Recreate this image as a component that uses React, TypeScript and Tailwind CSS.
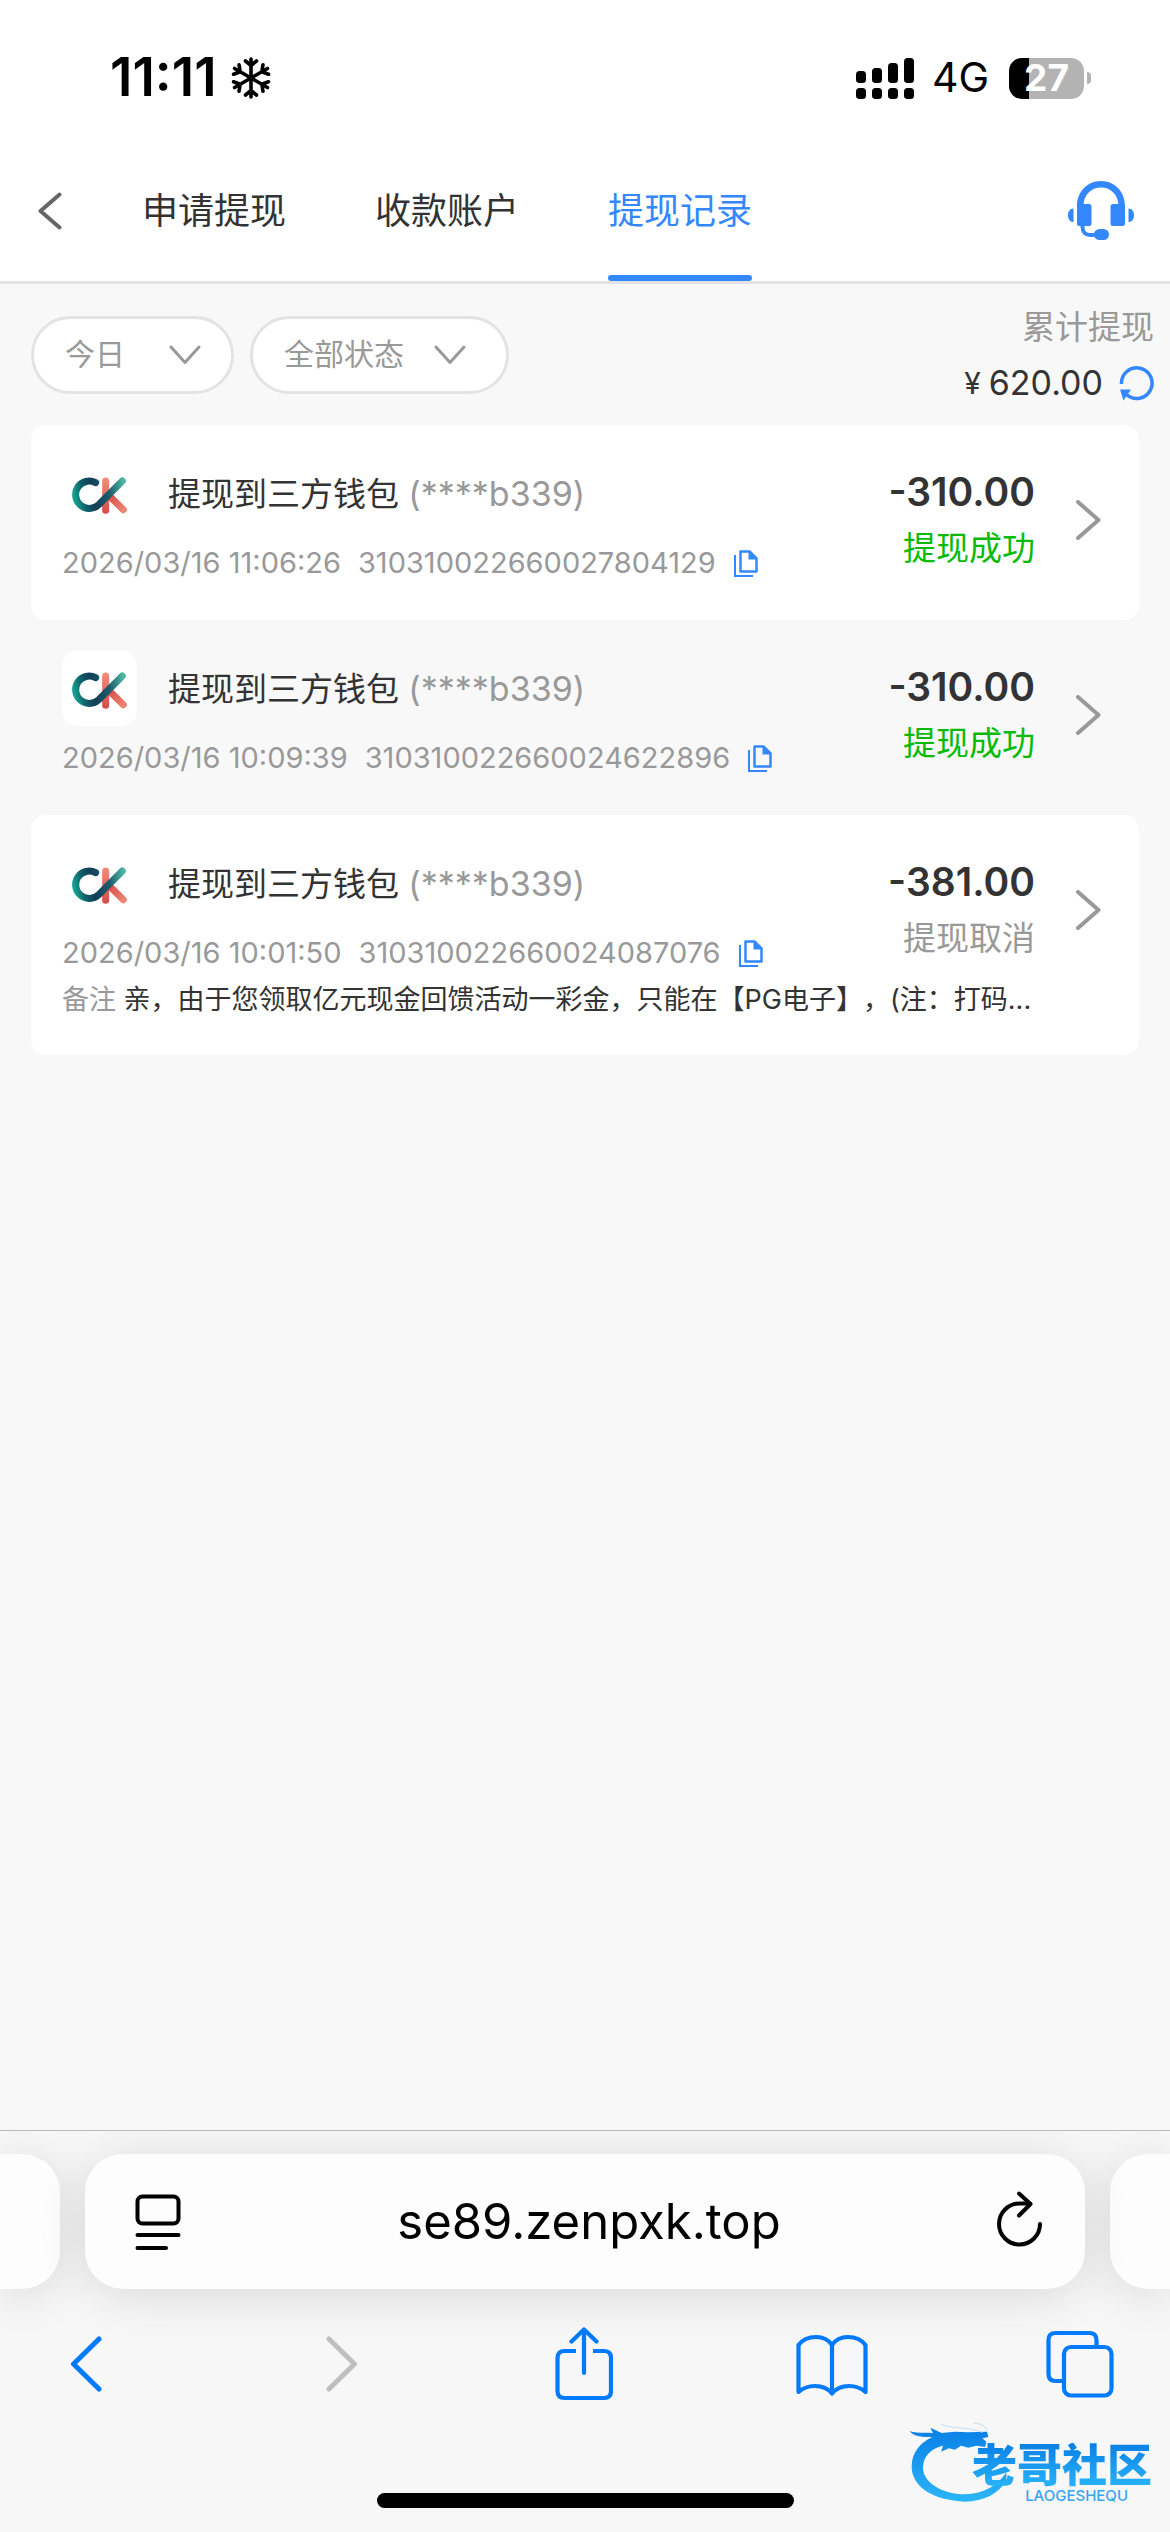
import React from 'react';

type Status = 'success' | 'cancelled';

interface WithdrawRecord {
  time: string;
  order: string;
  amount: string;
  status: Status;
  highlighted: boolean;
  note?: string;
}

const tabs = ['申请提现', '收款账户', '提现记录'];

const records: WithdrawRecord[] = [
  { time: '2026/03/16 11:06:26', order: '310310022660027804129', amount: '-310.00', status: 'success', highlighted: true },
  { time: '2026/03/16 10:09:39', order: '310310022660024622896', amount: '-310.00', status: 'success', highlighted: false },
  {
    time: '2026/03/16 10:01:50',
    order: '310310022660024087076',
    amount: '-381.00',
    status: 'cancelled',
    highlighted: true,
    note: '亲，由于您领取亿元现金回馈活动一彩金，只能在【PG电子】，(注：打码...',
  },
];

function Snowflake() {
  return (
    <svg className="h-[46px] w-[40px]" viewBox="-20 -23 40 46" fill="none" stroke="currentColor" strokeWidth="3.6" strokeLinecap="round" strokeLinejoin="round">
      {[0, 60, 120, 180, 240, 300].map((a) => (
        <path key={a} transform={`rotate(${a})`} d="M0 0V-19M-5.5 -17L0 -12.5L5.5 -17" />
      ))}
    </svg>
  );
}

function Signal() {
  return (
    <svg className="h-[41px] w-[58px]" viewBox="0 0 58 41" fill="currentColor">
      <rect x="0" y="13" width="10" height="12" rx="3.5" />
      <rect x="16" y="10" width="10" height="15" rx="3.5" />
      <rect x="32" y="5" width="10" height="20" rx="3.5" />
      <rect x="48" y="0" width="10" height="25" rx="3.5" />
      {[0, 16, 32, 48].map((x) => (
        <rect key={x} x={x} y="30" width="10" height="11" rx="3.5" />
      ))}
    </svg>
  );
}

function Headset() {
  return (
    <svg className="h-[60px] w-[68px]" viewBox="0 0 68 60" fill="#3388ff">
      <path d="M10 30V25C10 11 20 0 34 0S58 11 58 25V30H51.500V25C51.500 14 44 6.500 34 6.500S16.500 14 16.500 25V30Z" />
      <rect x="10" y="23" width="14.500" height="22" rx="2.500" />
      <rect x="43.500" y="23" width="14.500" height="22" rx="2.500" />
      <path d="M6.500 27.500V41C3 41 1 38 1 34.200S3 27.500 6.500 27.500ZM61.500 27.500V41C65 41 67 38 67 34.200S65 27.500 61.500 27.500Z" />
      <path d="M15.500 44V46C15.500 51 18.500 54 23 54H30" fill="none" stroke="#3388ff" strokeWidth="4" />
      <rect x="27" y="48" width="15" height="11" rx="5.500" />
    </svg>
  );
}

function WalletLogo() {
  return (
    <span className="flex size-[75px] shrink-0 rounded-[15px] bg-white">
      <svg className="size-full" viewBox="6 3 225 225" fill="none" strokeLinecap="round" strokeWidth="21">
        <defs>
          <linearGradient id="ckTeal" gradientUnits="userSpaceOnUse" x1="38" y1="115" x2="200" y2="80">
            <stop offset="0" stopColor="#17a492" />
            <stop offset="0.180" stopColor="#0f5f6a" />
            <stop offset="0.350" stopColor="#123f57" />
            <stop offset="0.650" stopColor="#1d5c6c" />
            <stop offset="0.950" stopColor="#50b8a5" />
          </linearGradient>
          <linearGradient id="ckRed" gradientUnits="userSpaceOnUse" x1="137" y1="70" x2="137" y2="175">
            <stop offset="0" stopColor="#f08d78" />
            <stop offset="1" stopColor="#d64b47" />
          </linearGradient>
          <linearGradient id="ckLeg" gradientUnits="userSpaceOnUse" x1="145" y1="120" x2="190" y2="165">
            <stop offset="0" stopColor="#d64b47" />
            <stop offset="1" stopColor="#ee8471" />
          </linearGradient>
        </defs>
        <path d="M137 78V166" stroke="url(#ckRed)" />
        <path d="M149 124L190 164" stroke="url(#ckLeg)" />
        <path d="M107 83A41 41 0 1 0 116 149L187 78" stroke="url(#ckTeal)" />
      </svg>
    </span>
  );
}

function CopyIcon() {
  return (
    <svg className="h-[27px] w-[24px]" viewBox="0 0 24 27" fill="none" stroke="#3388ff">
      <path d="M1 5V26H19" strokeWidth="2" />
      <path d="M6.500 1.500H15.500L22.500 8.500V21.500H6.500Z" strokeWidth="2.500" strokeLinejoin="round" />
      <path d="M14.500 1V9.500H23Z" fill="#3388ff" stroke="none" />
    </svg>
  );
}

function ChevronDown() {
  return (
    <svg className="pointer-events-none absolute top-[29px] right-[33px] h-[20px] w-[32px]" viewBox="0 0 32 20" fill="none" stroke="#999999" strokeWidth="3" strokeLinecap="round" strokeLinejoin="round">
      <path d="M2 2L16 17.500L30 2" />
    </svg>
  );
}

function FilterSelect({ label, value, width, right }: { label: string; value: string; width: string; right: string }) {
  return (
    <div className={`relative ${width}`}>
      <select aria-label={label} className="h-[78px] w-full appearance-none rounded-full border-[3px] border-[#e3e3e3] bg-white pl-[31px] text-[30px] text-[#999999]">
        <option>{value}</option>
      </select>
      <span className={`pointer-events-none absolute inset-y-0 ${right}`}>
        <ChevronDown />
      </span>
    </div>
  );
}

function RecordCard({ record }: { record: WithdrawRecord }) {
  const success = record.status === 'success';
  return (
    <li className={`rounded-[15px] pt-[31px] pb-[33px] pl-[31px] ${record.highlighted ? 'bg-white' : ''}`}>
      <div className="flex">
        <div className="min-w-0 flex-1">
          <div className="flex items-center">
            <WalletLogo />
            <h2 className="ml-[31px] text-[33px] leading-[48px] whitespace-nowrap text-[#333333]">
              提现到三方钱包 <span className="text-[34px] text-[#999999]">(****b339)</span>
            </h2>
          </div>
          <div className="mt-[8px] flex h-[48px] items-center text-[29px] whitespace-nowrap text-[#999999]">
            <time>{record.time}</time>
            <span className="ml-[17px]">{record.order}</span>
            <button type="button" aria-label="复制订单号" className="ml-[18px]">
              <CopyIcon />
            </button>
          </div>
        </div>
        <div className="mt-[7px] text-right leading-[57px]">
          <p className="text-[39px] font-semibold text-[#333333]">{record.amount}</p>
          <p className={`text-[33px] ${success ? 'text-[#09bb07]' : 'text-[#999999]'}`}>{success ? '提现成功' : '提现取消'}</p>
        </div>
        <button type="button" aria-label="查看详情" className="mt-[7px] mr-[38px] ml-[40px] h-[114px]">
          <svg className="h-[40px] w-[26px]" viewBox="0 0 26 40" fill="none" stroke="#999999" strokeWidth="4" strokeLinecap="round" strokeLinejoin="round">
            <path d="M3 2L23.500 20L3 38" />
          </svg>
        </button>
      </div>
      {record.note && (
        <p className="mr-[90px] truncate text-[27px] leading-[45px] text-[#333333] [text-spacing-trim:space-all]">
          <span className="text-[#999999]">备注</span> {record.note}
        </p>
      )}
    </li>
  );
}

function Watermark() {
  return (
    <div className="absolute right-[18px] bottom-[22px] flex h-[95px] w-[247px] justify-end">
      <svg className="absolute top-0 left-0 h-[95px] w-[120px]" viewBox="0 0 360 285" fill="none">
        <defs>
          <linearGradient id="dragon" x1="0" y1="0" x2="0" y2="1">
            <stop offset="0" stopColor="#0a7fe6" />
            <stop offset="1" stopColor="#2bb6f8" />
          </linearGradient>
        </defs>
        <path
          fill="url(#dragon)"
          d="M14 48C32 56 60 52 84 54L76 38L110 54L150 50L190 52L246 50L250 66L232 70L244 80L240 96L214 92L190 98L168 92L150 104L132 100L108 110L114 92C78 100 54 124 54 158C54 200 106 236 180 238C238 236 278 212 304 172L304 196C282 236 236 260 180 260C84 256 20 216 20 154C20 114 46 82 82 66C54 66 26 66 14 48Z"
        />
        <path d="M108 28C140 42 184 34 232 52M206 24C230 26 244 36 246 46" stroke="#bfe0f8" strokeWidth="3" />
      </svg>
      <div className="relative flex flex-col items-end pt-[28px]">
        <span className="bg-gradient-to-b from-[#0a7fe6] to-[#2bb6f8] bg-clip-text text-[45px] leading-[46px] font-black text-transparent">老哥社区</span>
        <span className="mr-[24px] text-[15px] leading-[14px] font-medium text-[#37a5f0]">LAOGESHEQU</span>
      </div>
    </div>
  );
}

export default function App() {
  return (
    <div className="relative flex min-h-screen flex-col overflow-hidden bg-[#f8f8f8] font-['Inter','Noto_Sans_CJK_SC',sans-serif]">
      <div className="flex h-[141px] items-center justify-between bg-white pt-[15px] pr-[79px] pl-[110px] text-black">
        <div className="flex items-center gap-[14px]">
          <span className="text-[53px] font-semibold">11:11</span>
          <Snowflake />
        </div>
        <div className="flex items-center">
          <Signal />
          <span className="ml-[18px] text-[41px]">4G</span>
          <div className="ml-[20px] flex h-[41px] w-[75px] items-center justify-center rounded-[13px] bg-gradient-to-r from-black from-[27%] to-[#b3b3b3] to-[27%] text-[37px] font-bold text-white">27</div>
          <span className="ml-[3px] h-[12px] w-[4px] rounded-r-full bg-[#b3b3b3]" />
        </div>
      </div>

      <header className="flex h-[143px] items-center border-b-[3px] border-[#e3e3e3] bg-white pr-[35px] pl-[37px]">
        <button type="button" aria-label="返回">
          <svg className="h-[38px] w-[25px]" viewBox="0 0 25 38" fill="none" stroke="#666666" strokeWidth="4" strokeLinecap="round" strokeLinejoin="round">
            <path d="M22.500 2.500L3.500 19L22.500 35.500" />
          </svg>
        </button>
        <nav className="ml-[80px] flex h-full flex-1 gap-[89px]">
          {tabs.map((tab, i) => (
            <a
              key={tab}
              href="#"
              aria-current={i === 2 ? 'page' : undefined}
              className={`relative flex items-center text-[36px] ${i === 2 ? 'text-[#3388ff]' : 'text-[#333333]'}`}
            >
              {tab}
              {i === 2 && <span className="absolute inset-x-0 bottom-0 h-[6px] rounded-full bg-[#3388ff]" />}
            </a>
          ))}
        </nav>
        <button type="button" aria-label="客服">
          <Headset />
        </button>
      </header>

      <main className="flex-1">
        <div className="flex h-[141px] items-center justify-between pr-[16px] pl-[31px]">
          <div className="flex gap-[16px]">
            <FilterSelect label="日期" value="今日" width="w-[203px]" right="right-0" />
            <FilterSelect label="状态" value="全部状态" width="w-[259px]" right="right-[10px]" />
          </div>
          <div className="text-right text-[33px] leading-[56px]">
            <p className="text-[#999999]">累计提现</p>
            <div className="flex items-center justify-end text-[#333333]">
              <span className="text-[30px]">¥</span>
              <span className="ml-[8px] text-[34px]">620.00</span>
              <button type="button" aria-label="刷新" className="ml-[16px]">
                <svg className="h-[36px] w-[35px]" viewBox="0 0 35 36" fill="none" stroke="#3388ff" strokeWidth="3.5">
                  <path d="M2.500 19A15.300 15.300 0 1 1 7.500 29.500" />
                  <path d="M1 24.500H12L4.500 35.500Z" fill="#3388ff" stroke="none" />
                </svg>
              </button>
            </div>
          </div>
        </div>

        <ul className="mx-[31px]">
          {records.map((record) => (
            <RecordCard key={record.order} record={record} />
          ))}
        </ul>
      </main>

      <footer className="overflow-hidden border-t border-[#b9bbb9] bg-[#f7f7f7] pt-[23px]">
        <div className="flex h-[135px] gap-[25px]">
          <div className="w-[60px] rounded-r-[38px] bg-[#fdfdfd] shadow-[0_6px_50px_rgba(0,0,0,0.12)]" />
          <div className="relative flex flex-1 items-center rounded-[38px] bg-[#fdfdfd] pr-[42px] pl-[50px] text-black shadow-[0_6px_50px_rgba(0,0,0,0.12)]">
            <button type="button" aria-label="页面菜单">
              <svg className="h-[56px] w-[46px]" viewBox="0 0 46 56" fill="none" stroke="currentColor" strokeWidth="4" strokeLinecap="round">
                <rect x="2.500" y="0.500" width="41" height="27" rx="5" className="translate-y-[2px]" />
                <path d="M2.500 41H43.500M2.500 54H31" />
              </svg>
            </button>
            <input type="text" aria-label="地址" defaultValue="se89.zenpxk.top" className="min-w-0 flex-1 bg-transparent text-center text-[49px] outline-none" />
            <button type="button" aria-label="重新加载">
              <svg className="h-[62px] w-[46px]" viewBox="0 0 46 62" fill="none" stroke="currentColor" strokeWidth="4" strokeLinecap="round" strokeLinejoin="round">
                <path d="M43 33A20.500 20.500 0 1 1 22.500 12.500H33" />
                <path d="M22 2.500L33.500 13L22 24.500" />
              </svg>
            </button>
          </div>
          <div className="w-[60px] rounded-l-[38px] bg-[#fdfdfd] shadow-[0_6px_50px_rgba(0,0,0,0.12)]" />
        </div>

        <nav className="flex h-[150px] items-center justify-between pr-[50px] pl-[46px] text-[#007aff]">
          <button type="button" aria-label="后退" className="flex w-[80px] justify-center">
            <svg className="h-[56px] w-[32px]" viewBox="0 0 32 56" fill="none" stroke="currentColor" strokeWidth="5" strokeLinecap="round" strokeLinejoin="round">
              <path d="M29 3L3.500 28L29 53" />
            </svg>
          </button>
          <button type="button" aria-label="前进" className="flex w-[80px] justify-center text-[#bfbfbf]">
            <svg className="h-[56px] w-[46px]" viewBox="0 0 46 56" fill="none" stroke="currentColor" strokeWidth="5" strokeLinecap="round" strokeLinejoin="round">
              <path d="M17 3L42.500 28L17 53" />
            </svg>
          </button>
          <button type="button" aria-label="分享" className="flex w-[80px] justify-center">
            <svg className="h-[74px] w-[60px]" viewBox="0 0 60 74" fill="none" stroke="currentColor" strokeWidth="4.200" strokeLinecap="round" strokeLinejoin="round">
              <path strokeLinecap="butt" d="M23 24H11.500C7 24 4.500 26.500 4.500 31V64C4.500 68.500 7 71 11.500 71H51.500C56 71 58 68.500 58 64V31C58 26.500 56 24 51.500 24H40" />
              <path d="M31 46V3M18.500 14.500L31 2.500L43.500 14.500" />
            </svg>
          </button>
          <button type="button" aria-label="书签" className="flex w-[80px] justify-center">
            <svg className="h-[64px] w-[72px]" viewBox="0 -2 72 64" fill="none" stroke="currentColor" strokeWidth="4.200" strokeLinecap="round" strokeLinejoin="round">
              <path d="M36 11C32 5 26 3 20 3S7 5 2.500 11V58C7 54 13 52 19 52S32 54.500 36 59.500C40 54.500 47 52 53 52S65 54 69.500 58V11C65 5 58 3 52 3S40 5 36 11ZM36 11V59" />
            </svg>
          </button>
          <button type="button" aria-label="标签页" className="flex w-[80px] justify-center">
            <svg className="h-[68px] w-[68px]" viewBox="0 0 68 68" fill="none" stroke="currentColor" strokeWidth="4.200">
              <path d="M50.500 16V10C50.500 5.500 48 3 43.500 3H9.500C5 3 2.500 5.500 2.500 10V44C2.500 48.500 5 51 9.500 51H16" />
              <rect x="18" y="17" width="47.500" height="48.500" rx="7" />
            </svg>
          </button>
        </nav>
        <div className="mx-auto mt-[54px] mb-[24px] h-[15px] w-[417px] rounded-full bg-black" />
      </footer>
      <Watermark />
    </div>
  );
}
